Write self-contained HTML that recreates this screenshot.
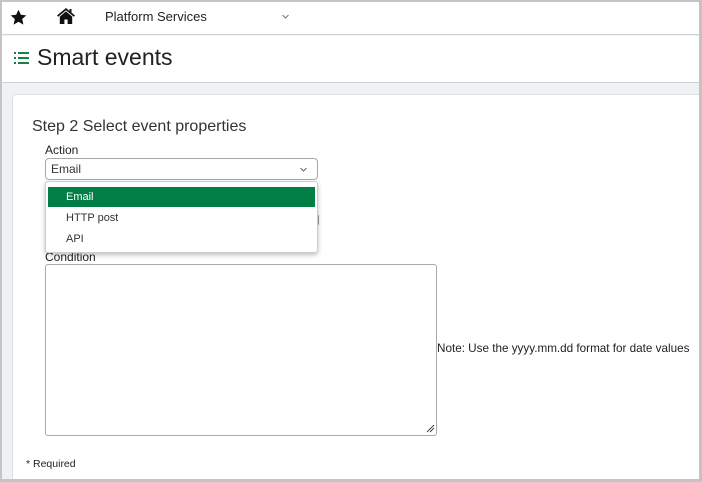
<!DOCTYPE html>
<html><head><style>
*{margin:0;padding:0;box-sizing:border-box}
body{width:702px;height:482px;overflow:hidden;font-family:"Liberation Sans",Arial,sans-serif;color:#222;background:#c4c4c4;position:relative}
.frame{position:absolute;left:2px;top:2px;width:697px;height:477px;background:#eef2f3;overflow:hidden}
.hdr{position:absolute;left:0;top:0;width:100%;height:33px;background:#fff;border-bottom:1px solid #cfd4d4}
.ttl{position:absolute;left:0;top:34px;width:100%;height:47px;background:#fff;border-bottom:1px solid #c9d3d6}
.card{position:absolute;left:10px;top:92px;width:720px;height:400px;background:#fff;border:1px solid #dde0e0;border-radius:5px}
.a{position:absolute;white-space:nowrap}
</style></head><body>
<div class="frame">
<div class="hdr">
 <svg class="a" style="left:8px;top:7px" width="17" height="17" viewBox="0 0 24 24"><path d="M12 1l3.3 7.2 7.7.8-5.8 5.2 1.7 7.8L12 18l-6.9 4 1.7-7.8L1 9l7.7-.8z" fill="#111"/></svg>
 <svg class="a" style="left:55px;top:6px" width="18" height="16" viewBox="0 0 18 16"><path d="M9 0L0 7.5l1.2 1.3L9 2.3l7.8 6.5L18 7.5 14.5 4.6V1h-2v2L9 0z" fill="#111"/><path d="M2.8 8.6V16h4.6v-4.5h3.2V16h4.6V8.6L9 3.4z" fill="#111"/></svg>
 <div class="a" style="left:103px;top:7px;font-size:13px;color:#222">Platform Services</div>
 <svg class="a" style="left:280px;top:12px" width="7" height="5" viewBox="0 0 7 5"><path d="M.5 1l3 3 3-3" stroke="#777" fill="none"/></svg>
</div>
<div class="ttl">
 <svg class="a" style="left:12px;top:16px" width="15" height="12" viewBox="0 0 15 12"><g fill="#1a7d4a"><rect x="0" y="0" width="2" height="2"/><rect x="0" y="5" width="2" height="2"/><rect x="0" y="10" width="2" height="2"/><rect x="4" y="0" width="11" height="2"/><rect x="4" y="5" width="11" height="2"/><rect x="4" y="10" width="11" height="2"/></g></svg>
 <div class="a" style="left:35px;top:8px;font-size:23px;color:#222">Smart events</div>
</div>
<div class="card"></div>
<div class="a" style="left:30px;top:116px;font-size:16px;color:#333">Step 2 Select event properties</div>
<div class="a" style="left:43px;top:141px;font-size:12px;color:#222">Action</div>
<div class="a" style="left:43px;top:156px;width:273px;height:22px;border:1px solid #a8a8a8;border-radius:4px;background:#fff"></div>
<div class="a" style="left:49px;top:160px;font-size:12px;color:#333">Email</div>
<svg class="a" style="left:298px;top:165px" width="7" height="5" viewBox="0 0 7 5"><path d="M.5 1l3 3 3-3" stroke="#666" fill="none"/></svg>
<div class="a" style="left:43px;top:211px;width:274px;height:14px;border:1px solid #999;border-radius:4px;background:#333"></div>
<div class="a" style="left:43px;top:248px;font-size:12px;color:#222">Condition</div>
<div class="a" style="left:43px;top:179px;width:273px;height:72px;border:1px solid #ccc;border-radius:3px;background:#fff;box-shadow:0 2px 5px rgba(0,0,0,.25)">
 <div class="a" style="left:2px;top:5px;width:267px;height:20px;background:#007e45"></div>
 <div class="a" style="left:20px;top:9px;font-size:11px;color:#fff">Email</div>
 <div class="a" style="left:20px;top:30px;font-size:11px;color:#333">HTTP post</div>
 <div class="a" style="left:20px;top:51px;font-size:11px;color:#333">API</div>
</div>
<div class="a" style="left:43px;top:262px;width:392px;height:172px;border:1px solid #aaa;border-radius:3px;background:#fff"></div>
<svg class="a" style="left:424px;top:422px" width="9" height="9" viewBox="0 0 9 9"><path d="M1 8L8 1M4 8L8 4" stroke="#444"/></svg>
<div class="a" style="left:435px;top:340px;font-size:11.7px;color:#222">Note: Use the yyyy.mm.dd format for date values</div>
<div class="a" style="left:24px;top:456px;font-size:10.5px;color:#222">* Required</div>
</div>
</body></html>
